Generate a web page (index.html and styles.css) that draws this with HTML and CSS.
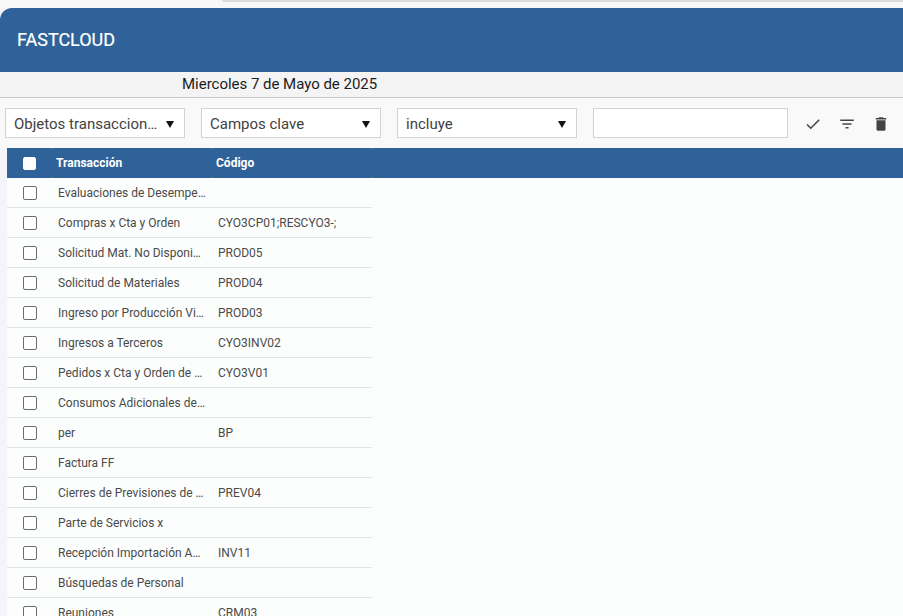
FILE: index.html
```html
<!DOCTYPE html>
<html lang="es">
<head>
<meta charset="utf-8">
<title>FASTCLOUD</title>
<link rel="stylesheet" href="styles.css">
</head>
<body>
<div class="chrome"><div class="chrome-line"></div></div>
<header class="appbar">FASTCLOUD</header>
<div class="datebar">Miercoles 7 de Mayo de 2025</div>
<div class="toolbar">
  <div class="select"><span class="select-text">Objetos transaccion…</span><span class="arrow"></span></div>
  <div class="select"><span class="select-text">Campos clave</span><span class="arrow"></span></div>
  <div class="select"><span class="select-text">incluye</span><span class="arrow"></span></div>
  <input class="search" type="text" aria-label="Buscar">
  <div class="actions">
    <svg class="icon" viewBox="0 0 24 24"><path d="M9 16.17 4.83 12l-1.42 1.41L9 19 21 7l-1.41-1.41z"/></svg>
    <svg class="icon" viewBox="0 0 24 24"><path d="M10 18h4v-2h-4v2zM3 6v2h18V6H3zm3 7h12v-2H6v2z"/></svg>
    <svg class="icon" viewBox="0 0 24 24"><path d="M6 19c0 1.1.9 2 2 2h8c1.1 0 2-.9 2-2V7H6v12zM19 4h-3.5l-1-1h-5l-1 1H5v2h14V4z"/></svg>
  </div>
</div>
<main class="content">
  <div class="thead">
    <div class="cell-check"><span class="box box-head"></span></div>
    <div class="th">Transacción</div>
    <div class="th">Código</div>
    <div class="th"></div>
  </div>
  <div class="row"><div class="cell-check"><span class="box"></span></div><div class="td">Evaluaciones de Desempe…</div><div class="td td-code"></div></div>
  <div class="row"><div class="cell-check"><span class="box"></span></div><div class="td">Compras x Cta y Orden</div><div class="td td-code">CYO3CP01;RESCYO3-;</div></div>
  <div class="row"><div class="cell-check"><span class="box"></span></div><div class="td">Solicitud Mat. No Disponi…</div><div class="td td-code">PROD05</div></div>
  <div class="row"><div class="cell-check"><span class="box"></span></div><div class="td">Solicitud de Materiales</div><div class="td td-code">PROD04</div></div>
  <div class="row"><div class="cell-check"><span class="box"></span></div><div class="td">Ingreso por Producción Vi…</div><div class="td td-code">PROD03</div></div>
  <div class="row"><div class="cell-check"><span class="box"></span></div><div class="td">Ingresos a Terceros</div><div class="td td-code">CYO3INV02</div></div>
  <div class="row"><div class="cell-check"><span class="box"></span></div><div class="td">Pedidos x Cta y Orden de …</div><div class="td td-code">CYO3V01</div></div>
  <div class="row"><div class="cell-check"><span class="box"></span></div><div class="td">Consumos Adicionales de…</div><div class="td td-code"></div></div>
  <div class="row"><div class="cell-check"><span class="box"></span></div><div class="td">per</div><div class="td td-code">BP</div></div>
  <div class="row"><div class="cell-check"><span class="box"></span></div><div class="td">Factura FF</div><div class="td td-code"></div></div>
  <div class="row"><div class="cell-check"><span class="box"></span></div><div class="td">Cierres de Previsiones de …</div><div class="td td-code">PREV04</div></div>
  <div class="row"><div class="cell-check"><span class="box"></span></div><div class="td">Parte de Servicios x</div><div class="td td-code"></div></div>
  <div class="row"><div class="cell-check"><span class="box"></span></div><div class="td">Recepción Importación A…</div><div class="td td-code">INV11</div></div>
  <div class="row"><div class="cell-check"><span class="box"></span></div><div class="td">Búsquedas de Personal</div><div class="td td-code"></div></div>
  <div class="row"><div class="cell-check"><span class="box"></span></div><div class="td">Reuniones</div><div class="td td-code">CRM03</div></div>
</main>
</body>
</html>
```
FILE: styles.css
```css
* { box-sizing: border-box; }
html, body { margin: 0; height: 100%; overflow: hidden; }
body { background: #f4f4fa; font-family: Roboto, "Liberation Sans", sans-serif; color: #212121; }
.chrome { height: 8px; background: #f8f8f8; padding-left: 222px; }
.chrome-line { height: 2px; background: #dcdcdc; border-bottom-left-radius: 4px; }
.appbar { height: 64px; background: #2f6299; color: #fff; font-size: 18px; font-weight: 400; -webkit-text-stroke: .2px #fff; line-height: 64px; padding-left: 17px; border-top-left-radius: 12px; }
.datebar { height: 26px; background: #f4f4f4; border-bottom: 1px solid #c8c8c8; font-size: 15px; line-height: 24px; padding-left: 182px; color: #1c1c1c; letter-spacing: -.02px; }
.toolbar { height: 50px; background: #f9f9f9; display: flex; align-items: center; padding-left: 5px; gap: 16px; }
.select { width: 180px; height: 30px; background: #fff; border: 1px solid #d2d2d2; display: flex; align-items: center; justify-content: space-between; padding: 2px 8px 0; font-size: 15px; color: #424242; }
.select-text { white-space: nowrap; }
.arrow { width: 0; height: 0; border-left: 4.5px solid transparent; border-right: 4.5px solid transparent; border-top: 7px solid #111; margin: 0 2px 0 0; }
.search { width: 195px; height: 30px; background: #fff; border: 1px solid #d2d2d2; padding: 0; outline: none; }
.actions { display: flex; gap: 16px; }
.icon { width: 18px; height: 18px; fill: #444; display: block; margin-top: 1px; }
.content { margin-left: 7px; background: #fcfefd; height: 468px; overflow: hidden; }
.thead { display: flex; height: 30px; background: #2f6299; }
.thead .cell-check { height: 30px; }
.cell-check { width: 45px; flex: none; display: flex; align-items: center; padding-left: 16px; }
.box { width: 14px; height: 14px; display: block; border: 1px solid #6c6c6c; border-radius: 2px; background: #fff; }
.box-head { width: 13px; height: 13px; border: 1px solid #fff; }
.th { color: #fff; font-size: 12px; font-weight: 700; line-height: 30px; padding-left: 4px; width: 160px; background: linear-gradient(#6c90b8, #6c90b8) 0 0 / 1px 1px no-repeat, linear-gradient(#6c90b8, #6c90b8) 0 100% / 1px 1px no-repeat; }
.row { display: flex; width: 365px; height: 30px; border-bottom: 1px solid #e2e5e6; }
.td { font-size: 12px; line-height: 30px; padding-left: 6px; width: 160px; flex: none; color: #4a4a4a; white-space: nowrap; }
```
